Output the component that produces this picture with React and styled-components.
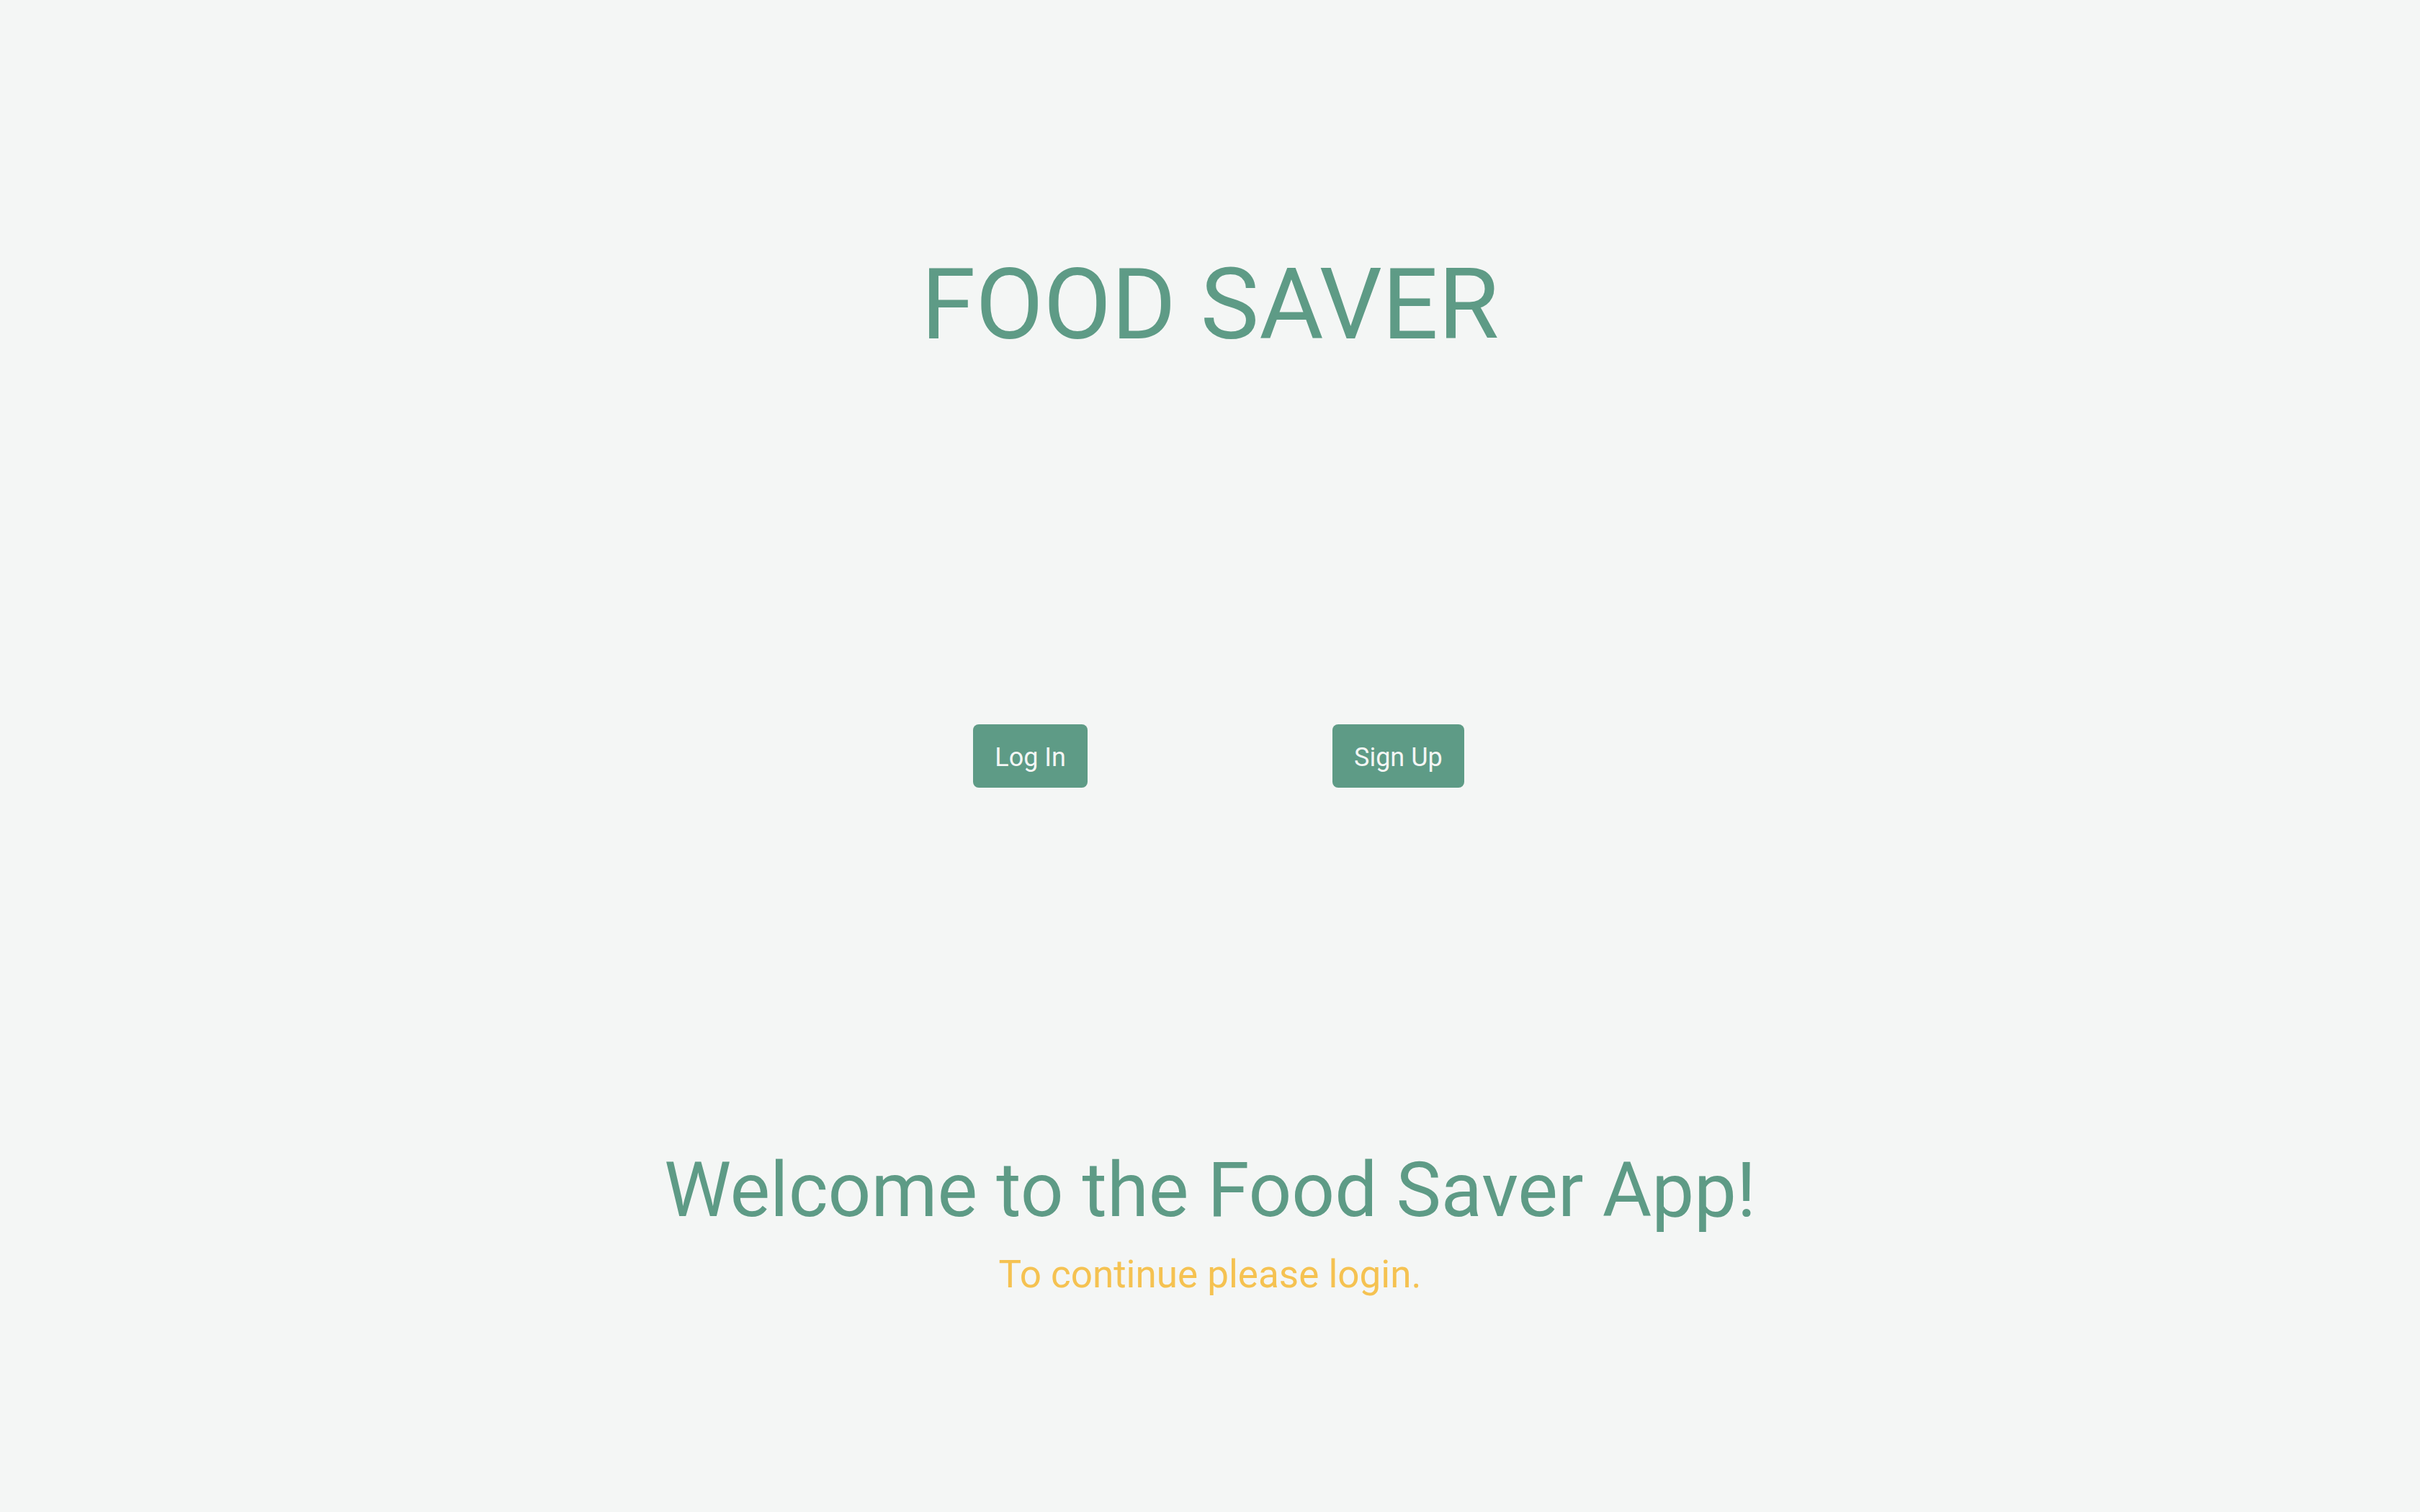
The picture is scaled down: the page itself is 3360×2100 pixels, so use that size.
import React from "react";
import styled, { createGlobalStyle } from "styled-components";

const GlobalStyle = createGlobalStyle`
  body {
    margin: 0;
    background: #f4f6f5;
    font-family: Roboto, sans-serif;
  }
`;

const Page = styled.main`
  display: grid;
  grid-template-rows: 2fr 1fr 2fr;
  min-height: 100vh;
  justify-items: center;
  align-items: center;
  color: #5e9b86;
`;

const Title = styled.h1`
  margin: 0;
  padding-top: 6px;
  font-size: 137px;
  line-height: 160px;
  font-weight: 400;
`;

const Actions = styled.nav`
  display: grid;
  grid-template-columns: 1fr 1fr;
  column-gap: 340px;
`;

const Button = styled.button`
  justify-self: ${({ $align }) => $align};
  padding: 26px 30px 22px;
  border: 0;
  border-radius: 8px;
  background: #5e9b86;
  color: #f4f6f5;
  font-family: inherit;
  font-size: 36px;
  line-height: 40px;
  cursor: pointer;
`;

const Welcome = styled.section`
  padding-top: 32px;
  text-align: center;
`;

const Heading = styled.h2`
  margin: 0 0 20px;
  font-size: 105px;
  line-height: 128px;
  font-weight: 400;
`;

const Hint = styled.p`
  margin: 0;
  font-size: 53px;
  line-height: 64px;
  color: #f5c251;
`;

export default function App() {
  return (
    <>
      <GlobalStyle />
      <Page>
        <Title>FOOD SAVER</Title>
        <Actions>
          <Button type="button" $align="end">Log In</Button>
          <Button type="button" $align="start">Sign Up</Button>
        </Actions>
        <Welcome>
          <Heading>Welcome to the Food Saver App!</Heading>
          <Hint>To continue please login.</Hint>
        </Welcome>
      </Page>
    </>
  );
}
